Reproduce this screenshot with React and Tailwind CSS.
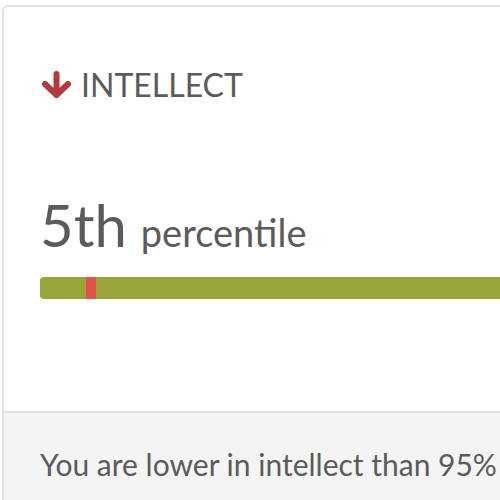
export default function App() {
  return (
    <div className="w-[500px] h-[500px] overflow-hidden bg-white pt-[5px] pl-[2px]" style={{ fontFamily: 'Lato, "Open Sans", sans-serif' }}>
      <div className="w-[720px] h-[560px] border-2 border-[#e2e2e2] rounded-[6px] flex flex-col text-[#5b5b5b]">
        <div className="px-[36px] pt-[58px] h-[404px]">
          <div className="flex items-center gap-[8px] h-[40px]">
            <svg width="33" height="28" viewBox="0 0 33 28" className="shrink-0">
              <path d="M16.5 3 V23 M5 13 L16.5 24 L28 13" stroke="#b23a3a" strokeWidth="6" strokeLinecap="round" strokeLinejoin="round" fill="none" />
            </svg>
            <span className="text-[32px] leading-none">INTELLECT</span>
          </div>
          <div className="mt-[91px] flex items-baseline gap-[14px]">
            <span className="text-[58px] leading-none">5th</span>
            <span className="text-[38px] leading-none">percentile</span>
          </div>
          <div className="mt-[23px] h-[22px] rounded-[4px] bg-[#97a637] relative">
            <div className="absolute left-[46px] top-0 h-full w-[10px] bg-[#e0524b]" />
          </div>
        </div>
        <div className="flex-1 bg-[#f4f4f4] border-t-2 border-[#e2e2e2] px-[36px] pt-[36px]">
          <p className="text-[30px] leading-none whitespace-nowrap">You are lower in intellect than 95% of people.</p>
        </div>
      </div>
    </div>
  );
}
